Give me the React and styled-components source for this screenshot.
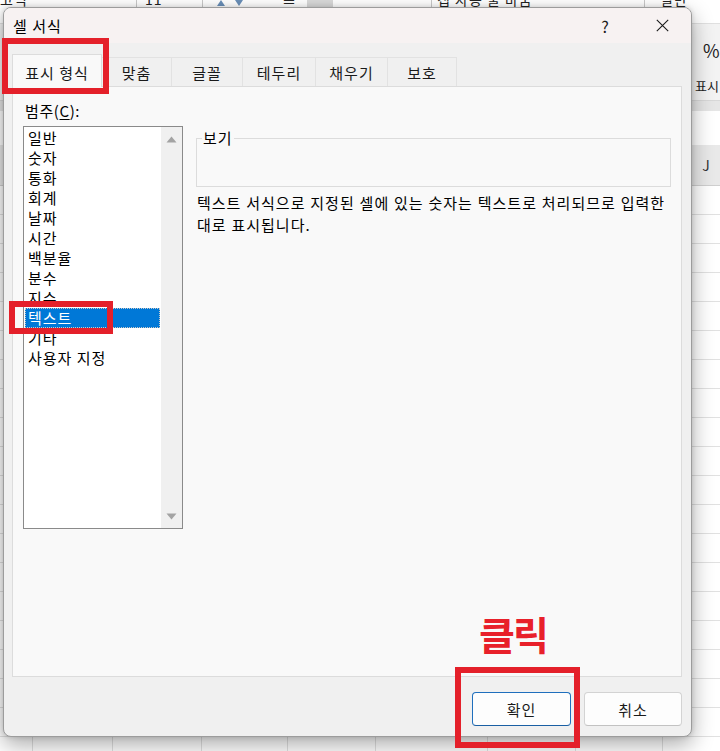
import React from 'react';
import styled, { createGlobalStyle } from 'styled-components';

const FONT = `"Noto Sans CJK KR", "Noto Sans", sans-serif`;

const GlobalStyle = createGlobalStyle`
  html, body { margin: 0; padding: 0; background: #fff; }
  body { font-family: ${FONT}; }
`;

const Screen = styled.div`
  position: relative;
  width: 720px;
  height: 751px;
  overflow: hidden;
  background: #fff;
  display: flex;
  flex-direction: column;
  font-family: ${FONT};
  letter-spacing: 1px;
`;

/* ---------- Excel backdrop ---------- */
const RibbonTop = styled.div`
  height: 23px;
  flex: none;
  display: flex;
  background: #fff;
  overflow: hidden;
`;

const RibbonCell = styled.div`
  width: ${(p) => p.$w}px;
  flex: none;
  box-sizing: border-box;
  border-right: ${(p) => (p.$sep ? '1px solid #c9c9c9' : 'none')};
  display: flex;
  align-items: flex-start;
  gap: 10px;
  padding-left: ${(p) => p.$pad}px;
  font-size: 14px;
  line-height: 16px;
  color: #222;
  white-space: nowrap;
`;

const CutText = styled.span`
  margin-top: -9px;
`;

const ToolSquare = styled.span`
  width: 26px;
  height: 8px;
  background: #d9d9d9;
`;

const RibbonBody = styled.div`
  height: 77px;
  flex: none;
  background: #f3f3f3;
  border-top: 1px solid #e0e0e0;
  box-sizing: border-box;
  display: flex;
`;

const NumberGroup = styled.div`
  margin-left: 695px;
  display: flex;
  flex-direction: column;
  padding-top: 15px;
  color: #222;
  white-space: nowrap;
  letter-spacing: 0;
`;

const Percent = styled.div`
  font-size: 18px;
  line-height: 22px;
  padding-left: 8px;
`;

const GroupName = styled.div`
  margin-top: 17px;
  font-size: 13px;
  line-height: 16px;
`;

const Band = styled.div`
  height: 11px;
  flex: none;
  background: #e6e6e6;
  border-top: 1px solid #d8d8d8;
  box-sizing: border-box;
`;

const FormulaRow = styled.div`
  height: 34px;
  flex: none;
  background: #fff;
`;

const Sheet = styled.div`
  flex: 1;
  display: flex;
  flex-direction: column;
`;

const HeaderRow = styled.div`
  height: 41px;
  flex: none;
  display: flex;
  background: #e9e9e9;
  border-bottom: 1px solid #cfcfcf;
  box-sizing: border-box;
`;

const HeaderCell = styled.div`
  width: ${(p) => p.$w}px;
  flex: none;
  box-sizing: border-box;
  border-right: 1px solid #d0d0d0;
  display: flex;
  align-items: center;
  justify-content: center;
  font-size: 14px;
  color: #333;
`;

const GridBody = styled.div`
  flex: 1;
  display: flex;
  background: repeating-linear-gradient(
    to bottom,
    transparent 0px,
    transparent 28px,
    #e1e1e1 28px,
    #e1e1e1 29px
  );
`;

const GridColumn = styled.div`
  width: ${(p) => p.$w}px;
  flex: none;
  box-sizing: border-box;
  border-right: 1px solid #e1e1e1;
`;

/* ---------- Dialog ---------- */
const Dialog = styled.div`
  position: absolute;
  left: 3px;
  top: 7px;
  width: 689px;
  height: 730px;
  box-sizing: border-box;
  border: 1px solid #9c9c9c;
  border-radius: 8px;
  overflow: hidden;
  background: #f0f0f0;
  box-shadow: 0 8px 22px rgba(0, 0, 0, 0.33), 0 0 5px rgba(0, 0, 0, 0.15);
  display: flex;
  flex-direction: column;
  z-index: 2;
`;

const TitleBar = styled.div`
  height: 35px;
  flex: none;
  background: #f7f2f2;
  display: flex;
  align-items: center;
  padding-left: 9px;
  padding-right: 6px;
  gap: 11px;
`;

const Title = styled.div`
  flex: 1;
  font-size: 15px;
  line-height: 20px;
  color: #000;
`;

const TitleButton = styled.div`
  width: 46px;
  height: 35px;
  display: flex;
  align-items: center;
  justify-content: center;
  font-size: 16px;
  color: #1a1a1a;
  letter-spacing: 0;
`;

const DialogBody = styled.div`
  flex: 1;
  display: flex;
  flex-direction: column;
  padding: 11px 9px 0 8px;
`;

const TabRow = styled.div`
  height: 32px;
  flex: none;
  display: flex;
  align-items: flex-end;
  position: relative;
  z-index: 1;
`;

const Tab = styled.div`
  width: ${(p) => p.$w}px;
  height: ${(p) => (p.$active ? 33 : 29)}px;
  margin-bottom: ${(p) => (p.$active ? -1 : 0)}px;
  box-sizing: border-box;
  flex: none;
  background: ${(p) => (p.$active ? '#f9f9f9' : '#f0f0f0')};
  border-top: 1px solid ${(p) => (p.$active ? '#dcdcdc' : '#e2e2e2')};
  border-right: 1px solid ${(p) => (p.$active ? '#dcdcdc' : '#e2e2e2')};
  border-left: ${(p) => (p.$active ? '1px solid #dcdcdc' : 'none')};
  padding-top: ${(p) => (p.$active ? 2 : 0)}px;
  display: flex;
  align-items: center;
  justify-content: center;
  font-size: 15px;
  color: #1a1a1a;
  white-space: nowrap;
`;

const Panel = styled.div`
  height: 591px;
  flex: none;
  box-sizing: border-box;
  border: 1px solid #dcdcdc;
  background: #f9f9f9;
  display: flex;
  gap: 13px;
  padding: 14px 4px 0 10px;
`;

const CategoryColumn = styled.div`
  width: 160px;
  flex: none;
  display: flex;
  flex-direction: column;
`;

const FieldLabel = styled.div`
  font-size: 15px;
  line-height: 20px;
  padding-left: 2px;
  margin-bottom: 5px;
  color: #000;
  letter-spacing: 0.6px;
  & u { text-underline-offset: 2px; }
`;

const ListBox = styled.div`
  height: 403px;
  box-sizing: border-box;
  border: 1px solid #8a8a8a;
  background: #fff;
  display: flex;
`;

const ListItems = styled.ul`
  flex: 1;
  list-style: none;
  margin: 0;
  padding: 1px 1px 0;
`;

const ListItem = styled.li`
  height: 20px;
  line-height: 18px;
  box-sizing: border-box;
  padding-left: 2px;
  font-size: 15px;
  white-space: nowrap;
  color: ${(p) => (p.$active ? '#fff' : '#000')};
  background: ${(p) => (p.$active ? '#0078d7' : 'transparent')};
  border: 1px ${(p) => (p.$active ? 'dotted #c9c9c9' : 'solid transparent')};
`;

const ScrollTrack = styled.div`
  width: 21px;
  flex: none;
  background: #f0f0f0;
  display: flex;
  flex-direction: column;
  justify-content: space-between;
  align-items: center;
  padding: 9px 0 8px;
`;

const DetailColumn = styled.div`
  width: 482px;
  flex: none;
  display: flex;
  flex-direction: column;
`;

const Sample = styled.fieldset`
  width: 475px;
  box-sizing: border-box;
  margin: 27px 0 0;
  padding: 0;
  border: 1px solid #dcdcdc;
  min-width: 0;
`;

const SampleLegend = styled.legend`
  margin-left: 5px;
  padding: 0 1px;
  font-size: 15px;
  line-height: 20px;
  color: #000;
`;

const SampleArea = styled.div`
  height: 38px;
`;

const Description = styled.p`
  margin: 5px 0 0;
  padding-left: 1px;
  font-size: 15px;
  line-height: 22px;
  word-spacing: 0.5px;
  color: #000;
`;

const Footer = styled.div`
  flex: 1;
  display: flex;
  justify-content: flex-end;
  align-items: flex-start;
  padding-top: 15px;
  gap: 13px;
`;

const Button = styled.button`
  width: ${(p) => p.$w}px;
  height: 34px;
  box-sizing: border-box;
  border-radius: 4px;
  background: #fdfdfd;
  border: 1px solid ${(p) => (p.$primary ? '#1f6fbd' : '#d3d3d3')};
  border-bottom-color: ${(p) => (p.$primary ? '#1a5fa3' : '#c2c2c2')};
  font-family: ${FONT};
  font-size: 15px;
  letter-spacing: 1px;
  color: #1a1a1a;
  padding: 0;
`;

/* ---------- Annotations ---------- */
const Mark = styled.div`
  position: absolute;
  left: ${(p) => p.$x}px;
  top: ${(p) => p.$y}px;
  width: ${(p) => p.$w}px;
  height: ${(p) => p.$h}px;
  box-sizing: border-box;
  border: 6px solid #e4202a;
  z-index: 5;
  pointer-events: none;
`;

const Callout = styled.div`
  position: absolute;
  left: 479px;
  top: 614px;
  font-size: 39px;
  line-height: 1;
  font-weight: 700;
  letter-spacing: -2px;
  color: #e8202a;
  z-index: 5;
`;

const Arrow = ({ up }) => (
  <svg width="11" height="7" viewBox="0 0 11 7">
    <path d={up ? 'M0.5 6.5 L5.5 0.5 L10.5 6.5 Z' : 'M0.5 0.5 L5.5 6.5 L10.5 0.5 Z'} fill="#a3a3a3" />
  </svg>
);

const CloseIcon = () => (
  <svg width="13" height="13" viewBox="0 0 13 13">
    <path d="M0.8 0.8 L12.2 12.2 M12.2 0.8 L0.8 12.2" stroke="#1a1a1a" strokeWidth="1.1" />
  </svg>
);

const SmallTri = ({ up }) => (
  <svg width="8" height="6" viewBox="0 0 8 6">
    <path d={up ? 'M0 6 L4 0 L8 6 Z' : 'M0 0 L4 6 L8 0 Z'} fill="#6a8fb8" />
  </svg>
);

const categories = ['일반', '숫자', '통화', '회계', '날짜', '시간', '백분율', '분수', '지수', '텍스트', '기타', '사용자 지정'];

const tabs = [
  { label: '표시 형식', w: 90, active: true },
  { label: '맞춤', w: 70 },
  { label: '글꼴', w: 71 },
  { label: '테두리', w: 73 },
  { label: '채우기', w: 72 },
  { label: '보호', w: 69 },
];

const columns = [
  { w: 33 }, { w: 80 }, { w: 89 }, { w: 86 }, { w: 88 }, { w: 112 }, { w: 88 }, { w: 87 }, { w: 88, label: 'J' },
];

export default function App() {
  return (
    <>
      <GlobalStyle />
      <Screen>
        <RibbonTop>
          <RibbonCell $w={137} $pad={0} $sep>
            <CutText>고딕</CutText>
          </RibbonCell>
          <RibbonCell $w={66} $pad={8} $sep>
            <CutText>11</CutText>
          </RibbonCell>
          <RibbonCell $w={65} $pad={14}>
            <SmallTri up />
            <SmallTri />
          </RibbonCell>
          <RibbonCell $w={164} $pad={14} $sep>
            <CutText>≡</CutText>
            <ToolSquare />
          </RibbonCell>
          <RibbonCell $w={213} $pad={5} $sep>
            <CutText>갭 자동 줄 바꿈</CutText>
          </RibbonCell>
          <RibbonCell $w={75} $pad={15}>
            <CutText>일반</CutText>
          </RibbonCell>
        </RibbonTop>
        <RibbonBody>
          <NumberGroup>
            <Percent>%</Percent>
            <GroupName>표시 형식</GroupName>
          </NumberGroup>
        </RibbonBody>
        <Band />
        <FormulaRow />
        <Sheet>
          <HeaderRow>
            {columns.map((c, i) => (
              <HeaderCell key={i} $w={c.w}>{c.label || ''}</HeaderCell>
            ))}
          </HeaderRow>
          <GridBody>
            {columns.map((c, i) => (
              <GridColumn key={i} $w={c.w} />
            ))}
          </GridBody>
        </Sheet>

        <Dialog>
          <TitleBar>
            <Title>셀 서식</Title>
            <TitleButton>?</TitleButton>
            <TitleButton>
              <CloseIcon />
            </TitleButton>
          </TitleBar>
          <DialogBody>
            <TabRow>
              {tabs.map((t) => (
                <Tab key={t.label} $w={t.w} $active={t.active}>
                  {t.label}
                </Tab>
              ))}
            </TabRow>
            <Panel>
              <CategoryColumn>
                <FieldLabel>
                  범주(<u>C</u>):
                </FieldLabel>
                <ListBox>
                  <ListItems>
                    {categories.map((c) => (
                      <ListItem key={c} $active={c === '텍스트'}>
                        {c}
                      </ListItem>
                    ))}
                  </ListItems>
                  <ScrollTrack>
                    <Arrow up />
                    <Arrow />
                  </ScrollTrack>
                </ListBox>
              </CategoryColumn>
              <DetailColumn>
                <Sample>
                  <SampleLegend>보기</SampleLegend>
                  <SampleArea />
                </Sample>
                <Description>
                  텍스트 서식으로 지정된 셀에 있는 숫자는 텍스트로 처리되므로 입력한 대로 표시됩니다.
                </Description>
              </DetailColumn>
            </Panel>
            <Footer>
              <Button $w={99} $primary>확인</Button>
              <Button $w={98}>취소</Button>
            </Footer>
          </DialogBody>
        </Dialog>

        <Mark $x={2} $y={38} $w={107} $h={56} />
        <Mark $x={9} $y={301} $w={104} $h={33} />
        <Mark $x={455} $y={667} $w={125} $h={81} />
        <Callout>클릭</Callout>
      </Screen>
    </>
  );
}
